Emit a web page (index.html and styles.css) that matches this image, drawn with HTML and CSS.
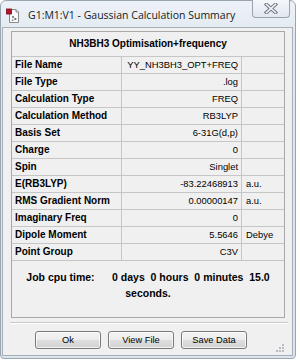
FILE: index.html
```html
<!DOCTYPE html>
<html>
<head>
<meta charset="utf-8">
<link rel="stylesheet" href="styles.css">
</head>
<body>
<div class="window">
  <div class="titlebar">
    <svg class="appicon" width="14" height="15" viewBox="0 0 14 15">
      <path d="M3.5 1.5 H10 L12.5 4 V14.5 H3.5 Z" fill="#fafafa" stroke="#8a8a8a" stroke-width="1"/>
      <path d="M10 1.5 V4 H12.5" fill="#e0e0e0" stroke="#8a8a8a" stroke-width="1"/>
      <rect x="0.5" y="1" width="5" height="5" fill="#b3132b" stroke="#7a0c1c" stroke-width="0.8"/>
      <circle cx="7" cy="9" r="0.9" fill="#555"/>
      <circle cx="9.5" cy="11" r="0.9" fill="#555"/>
      <circle cx="6.5" cy="12.3" r="0.8" fill="#777"/>
      <path d="M7 9 L9.5 11 L6.5 12.3" stroke="#888" stroke-width="0.6" fill="none"/>
    </svg>
    <span class="title">G1:M1:V1 - Gaussian Calculation Summary</span>
    <div class="close">
      <svg width="14" height="11" viewBox="0 0 14 11">
        <path d="M2.5 1.5 L11.5 9.5 M11.5 1.5 L2.5 9.5" stroke="#6f7985" stroke-width="3.6" stroke-linecap="square"/>
        <path d="M2.5 1.5 L11.5 9.5 M11.5 1.5 L2.5 9.5" stroke="#f2f5f8" stroke-width="1.6" stroke-linecap="square"/>
      </svg>
    </div>
  </div>
  <div class="client">
    <div class="box">
      <div class="head">NH3BH3 Optimisation+frequency</div>
      <div class="grid">
        <div class="lbl">File Name</div><div class="val">YY_NH3BH3_OPT+FREQ</div><div class="unit"></div>
        <div class="lbl">File Type</div><div class="val">.log</div><div class="unit"></div>
        <div class="lbl">Calculation Type</div><div class="val">FREQ</div><div class="unit"></div>
        <div class="lbl">Calculation Method</div><div class="val">RB3LYP</div><div class="unit"></div>
        <div class="lbl">Basis Set</div><div class="val">6-31G(d,p)</div><div class="unit"></div>
        <div class="lbl">Charge</div><div class="val">0</div><div class="unit"></div>
        <div class="lbl">Spin</div><div class="val">Singlet</div><div class="unit"></div>
        <div class="lbl">E(RB3LYP)</div><div class="val">-83.22468913</div><div class="unit">a.u.</div>
        <div class="lbl">RMS Gradient Norm</div><div class="val">0.00000147</div><div class="unit">a.u.</div>
        <div class="lbl">Imaginary Freq</div><div class="val">0</div><div class="unit"></div>
        <div class="lbl">Dipole Moment</div><div class="val">5.5646</div><div class="unit">Debye</div>
        <div class="lbl">Point Group</div><div class="val">C3V</div><div class="unit"></div>
      </div>
      <div class="cpu">Job cpu time:      0 days  0 hours  0 minutes  15.0<br>seconds.</div>
    </div>
    <div class="sep"></div>
    <div class="buttons">
      <button class="btn">Ok</button>
      <button class="btn">View File</button>
      <button class="btn">Save Data</button>
    </div>
    <svg class="grip" width="9" height="9" viewBox="0 0 9 9">
      <rect x="6" y="0" width="2" height="2" fill="#b8bcc2"/>
      <rect x="6" y="3" width="2" height="2" fill="#b8bcc2"/>
      <rect x="3" y="3" width="2" height="2" fill="#b8bcc2"/>
      <rect x="6" y="6" width="2" height="2" fill="#b8bcc2"/>
      <rect x="3" y="6" width="2" height="2" fill="#b8bcc2"/>
      <rect x="0" y="6" width="2" height="2" fill="#b8bcc2"/>
    </svg>
  </div>
</div>
</body>
</html>
```
FILE: styles.css
```css
* { box-sizing: border-box; }
html, body { margin: 0; padding: 0; background: #ffffff; }
body { width: 300px; height: 363px; overflow: hidden; }

.window {
  width: 296px;
  height: 359px;
  border: 1px solid #9aa5b2;
  border-radius: 6px 6px 4px 4px;
  background: linear-gradient(#edf2f7, #dfe7ef 40px, #dce4ec);
  padding: 0 3px 3px 2px;
  display: flex;
  flex-direction: column;
}

.titlebar {
  height: 27px;
  display: flex;
  align-items: center;
  flex: none;
}
.appicon { margin-left: 3px; margin-top: 1px; flex: none; }
.title {
  margin-left: 8px;
  font-family: "Open Sans", "Noto Sans", sans-serif;
  font-size: 10.5px;
  color: #1a1a1a;
  white-space: nowrap;
}
.close {
  margin-left: auto;
  margin-right: 2px;
  align-self: flex-start;
  margin-top: -1px;
  width: 38px;
  height: 18px;
  border: 1px solid #98a3b0;
  border-top: none;
  border-radius: 0 0 4px 4px;
  background: linear-gradient(#f4f7fa, #e2e8ef);
  display: flex;
  align-items: center;
  justify-content: center;
}

.client {
  flex: 1;
  background: #f0f0f0;
  box-shadow: 0 0 0 1px #a7b0ba;
  padding-top: 3px;
  position: relative;
  font-family: "Liberation Sans", Arial, sans-serif;
  color: #000;
}

.box {
  margin-left: 8px;
  width: 274px;
  height: 287px;
  border: 1px solid #a8a8a8;
  background: #f0f0f0;
}
.head {
  height: 25px;
  border-bottom: 1px solid #c6c6c6;
  font-weight: bold;
  font-size: 10px;
  text-align: center;
  line-height: 23px;
}
.grid {
  display: grid;
  grid-template-columns: 110px 120px 42px;
  grid-auto-rows: 17px;
}
.grid > div {
  border-bottom: 1px solid #c6c6c6;
  line-height: 16px;
  white-space: nowrap;
  overflow: hidden;
}
.lbl {
  border-right: 1px solid #c6c6c6;
  font-weight: bold;
  font-size: 10px;
  padding-left: 3px;
}
.val {
  border-right: 1px solid #c6c6c6;
  font-size: 9.4px;
  text-align: right;
  padding-right: 3px;
}
.unit {
  font-size: 9.4px;
  padding-left: 4px;
}
.cpu {
  height: 56px;
  padding-top: 8px;
  font-weight: bold;
  font-size: 10.5px;
  line-height: 16px;
  text-align: center;
  white-space: pre;
}

.sep {
  margin: 4px 0 0 7px;
  width: 278px;
  height: 2px;
  border-top: 1px solid #c8c8c8;
  border-bottom: 1px solid #ffffff;
}

.buttons {
  margin: 7px 0 0 32px;
  display: flex;
  gap: 7px;
}
.btn {
  width: 66px;
  height: 18px;
  padding: 0;
  border: 1px solid #7a7a7a;
  border-radius: 3px;
  background: linear-gradient(#f4f4f4 0%, #ececec 48%, #dedede 52%, #d2d2d2 100%);
  box-shadow: inset 0 0 0 1px rgba(255,255,255,0.7);
  font-family: "Liberation Sans", Arial, sans-serif;
  font-size: 9.3px;
  color: #000;
  line-height: 16px;
}

.grip {
  position: absolute;
  right: 7px;
  bottom: 2px;
}
```
